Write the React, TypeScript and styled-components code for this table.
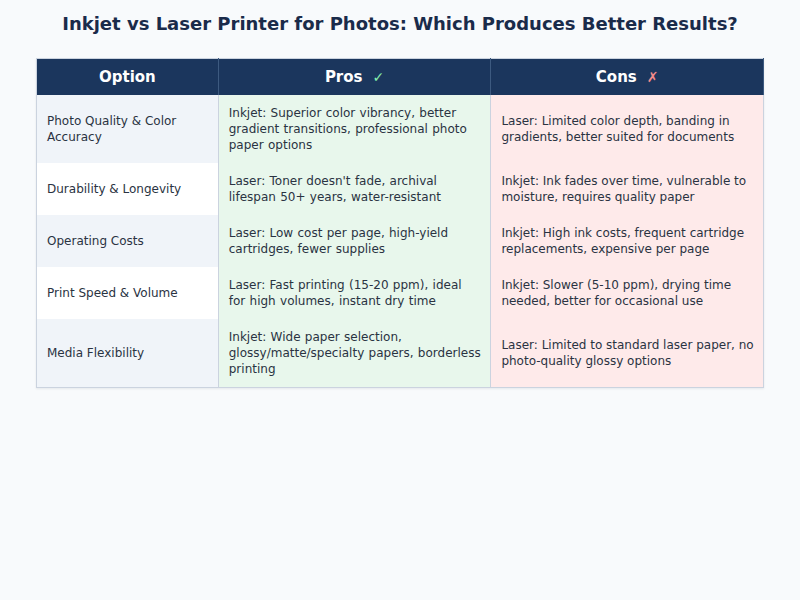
import { FC } from 'react';
import styled, { createGlobalStyle } from 'styled-components';

const GlobalStyle = createGlobalStyle`
  html, body {
    margin: 0;
    padding: 0;
    background: #f8fafc;
    font-family: "DejaVu Sans", sans-serif;
  }
`;

const Page = styled.div({
  width: 800,
  minHeight: 600,
  padding: '12px 36px',
  boxSizing: 'border-box',
});

const Title = styled.h1({
  margin: '0 0 22px',
  textAlign: 'center',
  fontSize: 18,
  lineHeight: '24px',
  fontWeight: 700,
  color: '#1a2b4a',
});

const Table = styled.table({
  width: 728,
  borderCollapse: 'collapse',
  border: '1px solid #cbd3df',
  boxShadow: '0 1px 2px rgba(15, 23, 42, 0.08)',
  tableLayout: 'fixed',
});

const Col = styled.col<{ $w: string }>(({ $w }) => ({
  width: $w,
}));

const HeadCell = styled.th({
  height: 36,
  padding: 0,
  background: '#1b365d',
  color: '#ffffff',
  fontSize: 15,
  fontWeight: 700,
  textAlign: 'center',
  borderRight: '1px solid #3d5a80',
});

const Mark = styled.span<{ $c: string }>(({ $c }) => ({
  color: $c,
  marginLeft: 10,
  fontWeight: 400,
  fontSize: 14,
}));

const Cell = styled.td<{ $bg: string; $pr?: number; $ws?: number }>(
  ({ $bg, $pr = 10, $ws = 0 }) => ({
    background: $bg,
    padding: `10px ${$pr}px 10px 10px`,
    fontSize: 12,
    lineHeight: '16px',
    wordSpacing: $ws,
    color: '#2a3342',
    verticalAlign: 'middle',
    borderRight: '1px solid #cbd3df',
  })
);

const rows = [
  {
    option: 'Photo Quality & Color Accuracy',
    pros: 'Inkjet: Superior color vibrancy, better gradient transitions, professional photo paper options',
    cons: 'Laser: Limited color depth, banding in gradients, better suited for documents',
  },
  {
    option: 'Durability & Longevity',
    pros: "Laser: Toner doesn't fade, archival lifespan 50+ years, water-resistant",
    cons: 'Inkjet: Ink fades over time, vulnerable to moisture, requires quality paper',
  },
  {
    option: 'Operating Costs',
    pros: 'Laser: Low cost per page, high-yield cartridges, fewer supplies',
    cons: 'Inkjet: High ink costs, frequent cartridge replacements, expensive per page',
  },
  {
    option: 'Print Speed & Volume',
    pros: 'Laser: Fast printing (15-20 ppm), ideal for high volumes, instant dry time',
    cons: 'Inkjet: Slower (5-10 ppm), drying time needed, better for occasional use',
  },
  {
    option: 'Media Flexibility',
    pros: 'Inkjet: Wide paper selection, glossy/matte/specialty papers, borderless printing',
    cons: 'Laser: Limited to standard laser paper, no photo-quality glossy options',
  },
];

const App: FC = () => {
  return (
    <Page>
      <GlobalStyle />
      <Title>Inkjet vs Laser Printer for Photos: Which Produces Better Results?</Title>
      <Table>
        <colgroup>
          <Col $w="25%" />
          <Col $w="37.5%" />
          <Col $w="37.5%" />
        </colgroup>
        <thead>
          <tr>
            <HeadCell>Option</HeadCell>
            <HeadCell>
              Pros<Mark $c="#86efac">✓</Mark>
            </HeadCell>
            <HeadCell>
              Cons<Mark $c="#f28b8b">✗</Mark>
            </HeadCell>
          </tr>
        </thead>
        <tbody>
          {rows.map((r, i) => (
            <tr key={r.option}>
              <Cell $bg={i % 2 === 0 ? '#f0f4f9' : '#ffffff'}>{r.option}</Cell>
              <Cell $bg="#e8f7ec" $pr={9} $ws={0.5}>
                {r.pros}
              </Cell>
              <Cell $bg="#feeaea" $pr={7}>
                {r.cons}
              </Cell>
            </tr>
          ))}
        </tbody>
      </Table>
    </Page>
  );
};

export default App;
